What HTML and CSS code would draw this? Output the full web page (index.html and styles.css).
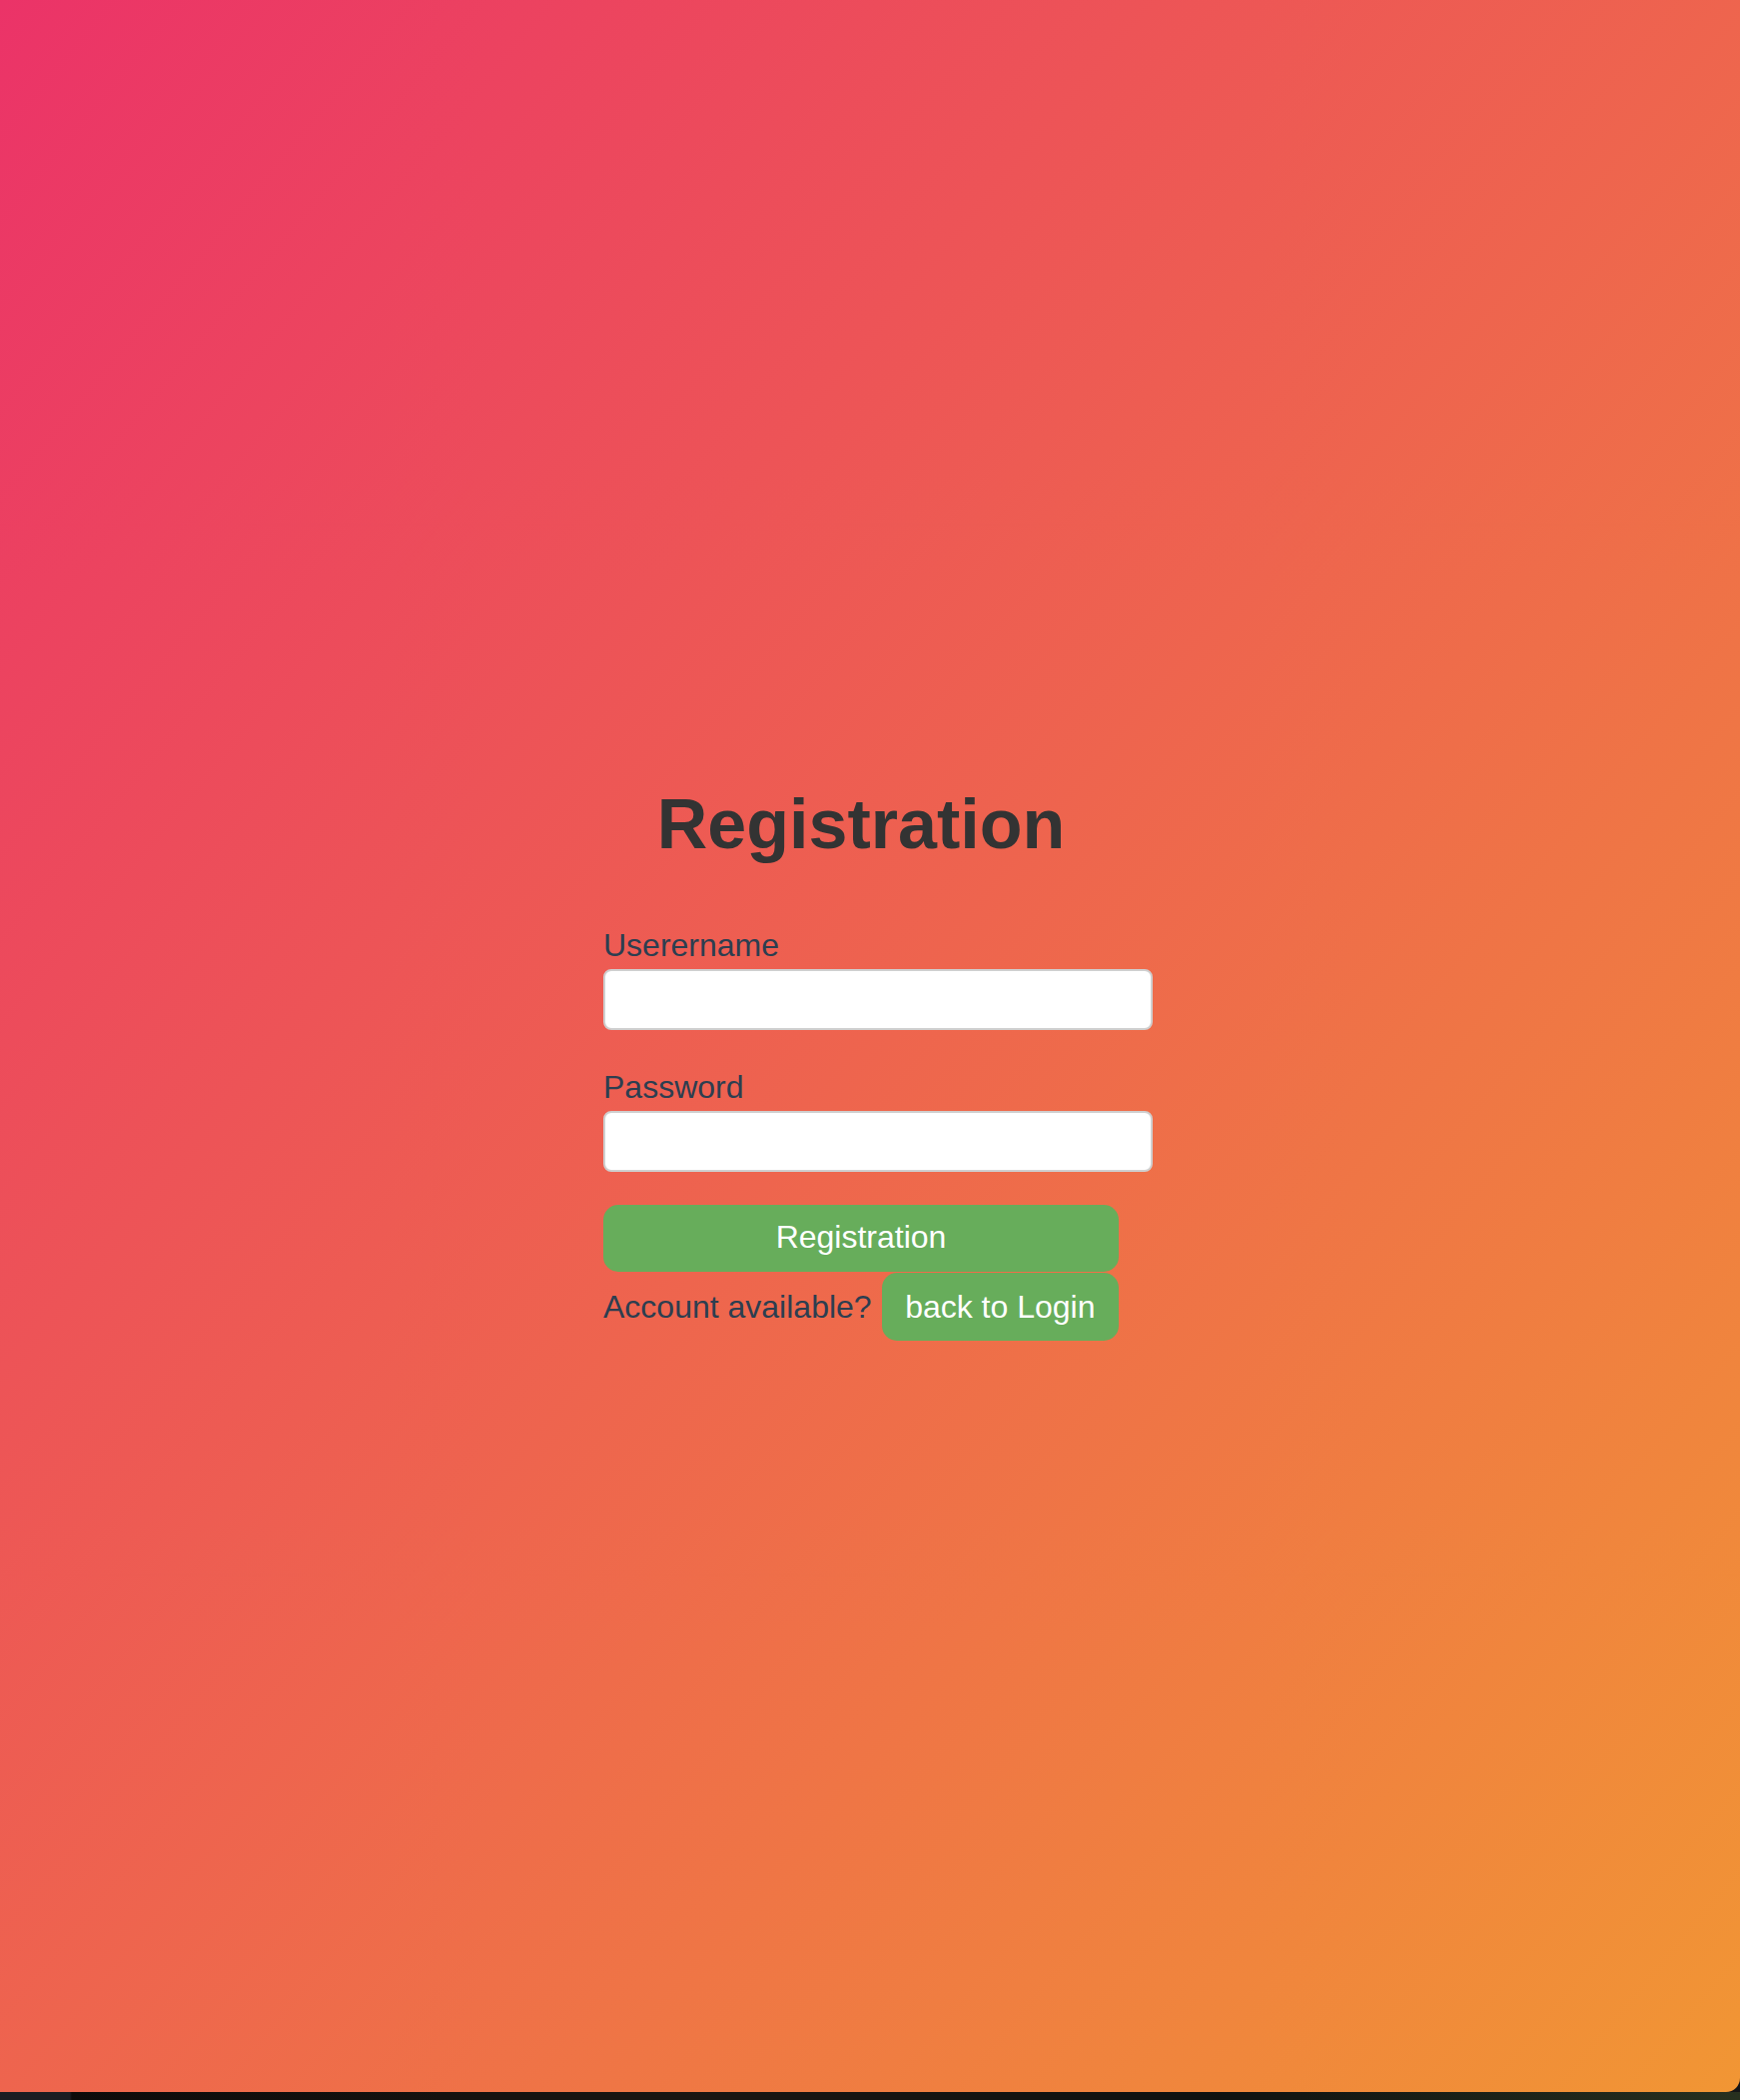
FILE: index.html
```html
<!DOCTYPE html>
<html lang="en">
<head>
<meta charset="utf-8">
<title>Registration</title>
<link rel="stylesheet" href="styles.css">
</head>
<body>
  <main class="screen">
    <form class="form">
      <h1 class="title">Registration</h1>
      <label class="field-label" for="username">Userername</label>
      <input class="field-input" id="username" type="text">
      <label class="field-label gap" for="password">Password</label>
      <input class="field-input" id="password" type="password">
      <button class="btn btn-wide" type="button">Registration</button>
      <div class="login-row">
        <span class="login-text">Account available?</span>
        <button class="btn btn-login" type="button">back to Login</button>
      </div>
    </form>
  </main>
  <div class="desktop-strip"></div>
</body>
</html>
```

FILE: styles.css
```css
html, body {
  margin: 0;
  padding: 0;
}

body {
  background: #141416;
  font-family: "Liberation Sans", Arial, Helvetica, sans-serif;
  overflow: hidden;
}

.screen {
  height: 2094px;
  box-sizing: border-box;
  background: linear-gradient(to bottom right, #eb3368, #f19634);
  border-bottom-right-radius: 14px;
  display: flex;
  flex-direction: column;
  align-items: center;
  padding-top: 785px;
  padding-right: 18px;
}

.desktop-strip {
  height: 8px;
  background: linear-gradient(to right, #1c1d22 0, #1c1d22 70px, #0d0b0a 72px, #1a1612 40%, #0f1210 70%, #27301f 100%);
}

.form {
  width: 516px;
  display: flex;
  flex-direction: column;
  align-items: stretch;
}

.title {
  margin: 0 0 63px;
  font-size: 70px;
  font-weight: bold;
  line-height: normal;
  color: #333333;
  text-align: center;
}

.field-label {
  display: block;
  font-size: 32px;
  line-height: normal;
  color: #2c3e50;
}

.field-label.gap {
  margin-top: 39px;
}

.field-input {
  display: block;
  width: 516px;
  height: 37px;
  margin-top: 5px;
  padding: 10px 15px;
  border: 2px solid #cfcfcf;
  border-radius: 8px;
  background: #ffffff;
  font-family: inherit;
  font-size: 32px;
  box-sizing: content-box;
  outline: none;
}

.btn {
  border: none;
  background: #67ad5b;
  color: #ffffff;
  font-family: inherit;
  font-size: 32px;
  line-height: normal;
  border-radius: 15px;
  cursor: pointer;
}

.btn-wide {
  margin-top: 33px;
  width: 100%;
  height: 67px;
  padding: 0 16px 3px;
}

.login-row {
  display: flex;
  align-items: baseline;
  margin-top: 1px;
}

.login-text {
  font-size: 32px;
  line-height: normal;
  color: #2c3e50;
}

.btn-login {
  margin-left: 10px;
  flex: 1;
  height: 68px;
  padding: 0 20px;
}
```
